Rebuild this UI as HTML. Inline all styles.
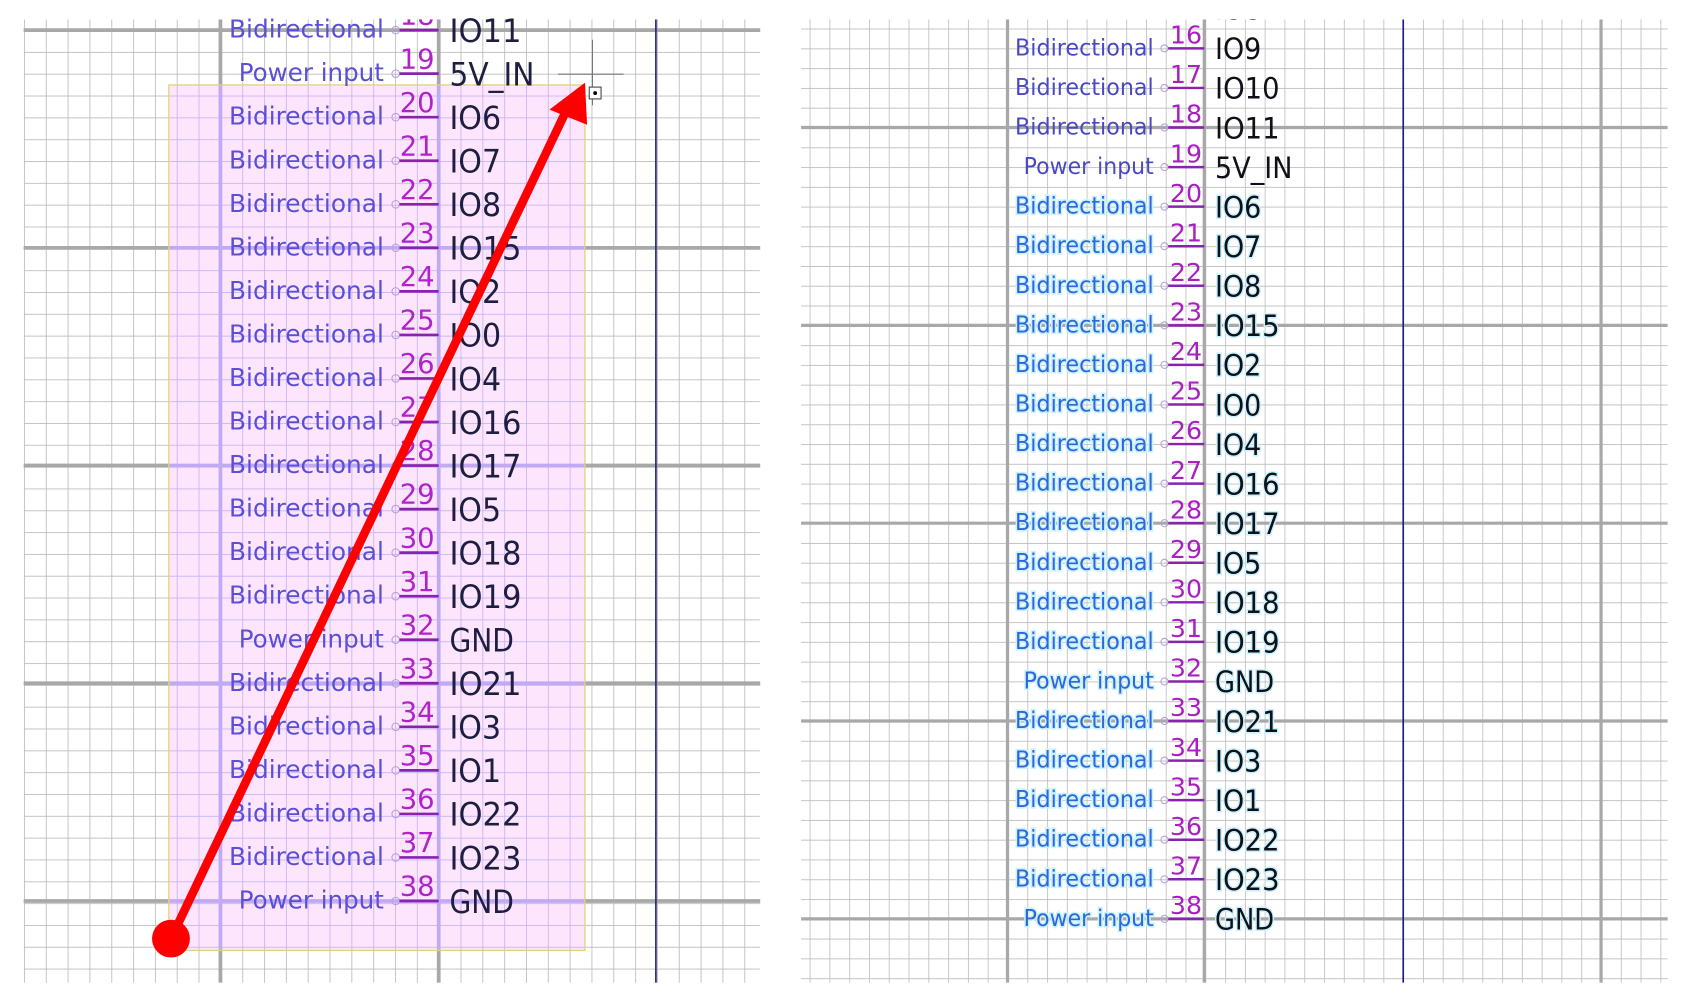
<!DOCTYPE html>
<html><head><meta charset="utf-8"><style>
html,body{margin:0;padding:0;background:#fff;width:1686px;height:1001px;overflow:hidden}
svg{display:block}
text{font-family:"DejaVu Sans","Liberation Sans",sans-serif}
.lb{fill:#5a4fd6;font-size:23px;text-anchor:end}
.ln{fill:#b023c8;font-size:25.5px;text-anchor:middle}
.lnm{fill:#1e1e40;font-size:29.5px}
.rb{fill:#4848c4;font-size:21.5px;text-anchor:end}
.rg{fill:#2f66dc;stroke:#c8f2ff;stroke-width:3px;paint-order:stroke}
.rn{fill:#a820c0;font-size:23.5px;text-anchor:middle}
.rnm{fill:#101018;font-size:27.5px}
.rng{stroke:#c8f2ff;stroke-width:3px;paint-order:stroke}
</style></head><body>
<svg width="1686" height="1001" viewBox="0 0 1568 931" preserveAspectRatio="none">
<defs>
<pattern id="pl" patternUnits="userSpaceOnUse" x="22.3" y="7.7" width="20.3" height="20.3"><path d="M0 0V20.3M0 0H20.3" stroke="#bcbcbc" stroke-width="1.6" fill="none"/></pattern>
<pattern id="pp" patternUnits="userSpaceOnUse" x="22.3" y="7.7" width="20.3" height="20.3"><path d="M0 0V20.3M0 0H20.3" stroke="#c6b4f2" stroke-width="1.6" fill="none"/></pattern>
<pattern id="pr" patternUnits="userSpaceOnUse" x="753" y="8.2" width="18.4" height="18.4"><path d="M0 0V18.4M0 0H18.4" stroke="#bcbcbc" stroke-width="1.5" fill="none"/></pattern>
<clipPath id="cl"><rect x="22" y="18" width="685" height="896"/></clipPath>
<clipPath id="ck"><rect x="157" y="79" width="387" height="805"/></clipPath>
<clipPath id="cr"><rect x="745" y="18" width="806" height="896"/></clipPath>
</defs>
<g clip-path="url(#cl)">
<rect x="22" y="18" width="686" height="897" fill="url(#pl)"/>
<g stroke="#a8a8a8" stroke-width="3.5">
<path d="M205 18V914M408 18V914M0 28H708M0 230.5H708M0 433H708M0 635.5H708M0 838H708"/>
</g>
<line x1="610" y1="18" x2="610" y2="914" stroke="#1c1c88" stroke-width="1.5"/>
<rect x="157" y="79" width="387" height="805" fill="#fde6fd"/>
<g clip-path="url(#ck)">
<rect x="157" y="79" width="387" height="805" fill="url(#pp)"/>
<path d="M205 18V914M408 18V914M0 230.5H708M0 433H708M0 635.5H708M0 838H708" stroke="#c0aaf4" stroke-width="3.5"/>
</g>
<rect x="157" y="79" width="387" height="805" fill="none" stroke="#e2d27a" stroke-width="1.2"/>
<path d="M519 69H580M551 37V98" stroke="#777" stroke-width="1"/>
<rect x="548" y="81" width="11" height="11" fill="#fff" stroke="#444" stroke-width="1"/>
<circle cx="553.5" cy="86.5" r="1.8" fill="#000"/>
</g>
<g>
<g transform="translate(0,28)"><text class="lb" x="357" y="7" textLength="144" lengthAdjust="spacingAndGlyphs">Bidirectional</text><circle cx="368" cy="0" r="3.5" fill="none" stroke="#b8a0d8"/><line x1="371.5" x2="408" y1="0" y2="0" stroke="#8a22b0" stroke-width="2.5"/><text class="lnm" x="418" y="11" textLength="67" lengthAdjust="spacingAndGlyphs">IO11</text></g>
<g transform="translate(0,68.5)"><text class="lb" x="357" y="7" textLength="135" lengthAdjust="spacingAndGlyphs">Power input</text><circle cx="368" cy="0" r="3.5" fill="none" stroke="#b8a0d8"/><line x1="371.5" x2="408" y1="0" y2="0" stroke="#8a22b0" stroke-width="2.5"/><text class="ln" x="388" y="-5">19</text><text class="lnm" x="418" y="11" textLength="79" lengthAdjust="spacingAndGlyphs">5V_IN</text></g>
<g transform="translate(0,109)"><text class="lb" x="357" y="7" textLength="144" lengthAdjust="spacingAndGlyphs">Bidirectional</text><circle cx="368" cy="0" r="3.5" fill="none" stroke="#b8a0d8"/><line x1="371.5" x2="408" y1="0" y2="0" stroke="#8a22b0" stroke-width="2.5"/><text class="ln" x="388" y="-5">20</text><text class="lnm" x="418" y="11" textLength="48" lengthAdjust="spacingAndGlyphs">IO6</text></g>
<g transform="translate(0,149.5)"><text class="lb" x="357" y="7" textLength="144" lengthAdjust="spacingAndGlyphs">Bidirectional</text><circle cx="368" cy="0" r="3.5" fill="none" stroke="#b8a0d8"/><line x1="371.5" x2="408" y1="0" y2="0" stroke="#8a22b0" stroke-width="2.5"/><text class="ln" x="388" y="-5">21</text><text class="lnm" x="418" y="11" textLength="48" lengthAdjust="spacingAndGlyphs">IO7</text></g>
<g transform="translate(0,190)"><text class="lb" x="357" y="7" textLength="144" lengthAdjust="spacingAndGlyphs">Bidirectional</text><circle cx="368" cy="0" r="3.5" fill="none" stroke="#b8a0d8"/><line x1="371.5" x2="408" y1="0" y2="0" stroke="#8a22b0" stroke-width="2.5"/><text class="ln" x="388" y="-5">22</text><text class="lnm" x="418" y="11" textLength="48" lengthAdjust="spacingAndGlyphs">IO8</text></g>
<g transform="translate(0,230.5)"><text class="lb" x="357" y="7" textLength="144" lengthAdjust="spacingAndGlyphs">Bidirectional</text><circle cx="368" cy="0" r="3.5" fill="none" stroke="#b8a0d8"/><line x1="371.5" x2="408" y1="0" y2="0" stroke="#8a22b0" stroke-width="2.5"/><text class="ln" x="388" y="-5">23</text><text class="lnm" x="418" y="11" textLength="67" lengthAdjust="spacingAndGlyphs">IO15</text></g>
<g transform="translate(0,271)"><text class="lb" x="357" y="7" textLength="144" lengthAdjust="spacingAndGlyphs">Bidirectional</text><circle cx="368" cy="0" r="3.5" fill="none" stroke="#b8a0d8"/><line x1="371.5" x2="408" y1="0" y2="0" stroke="#8a22b0" stroke-width="2.5"/><text class="ln" x="388" y="-5">24</text><text class="lnm" x="418" y="11" textLength="48" lengthAdjust="spacingAndGlyphs">IO2</text></g>
<g transform="translate(0,311.5)"><text class="lb" x="357" y="7" textLength="144" lengthAdjust="spacingAndGlyphs">Bidirectional</text><circle cx="368" cy="0" r="3.5" fill="none" stroke="#b8a0d8"/><line x1="371.5" x2="408" y1="0" y2="0" stroke="#8a22b0" stroke-width="2.5"/><text class="ln" x="388" y="-5">25</text><text class="lnm" x="418" y="11" textLength="48" lengthAdjust="spacingAndGlyphs">IO0</text></g>
<g transform="translate(0,352)"><text class="lb" x="357" y="7" textLength="144" lengthAdjust="spacingAndGlyphs">Bidirectional</text><circle cx="368" cy="0" r="3.5" fill="none" stroke="#b8a0d8"/><line x1="371.5" x2="408" y1="0" y2="0" stroke="#8a22b0" stroke-width="2.5"/><text class="ln" x="388" y="-5">26</text><text class="lnm" x="418" y="11" textLength="48" lengthAdjust="spacingAndGlyphs">IO4</text></g>
<g transform="translate(0,392.5)"><text class="lb" x="357" y="7" textLength="144" lengthAdjust="spacingAndGlyphs">Bidirectional</text><circle cx="368" cy="0" r="3.5" fill="none" stroke="#b8a0d8"/><line x1="371.5" x2="408" y1="0" y2="0" stroke="#8a22b0" stroke-width="2.5"/><text class="ln" x="388" y="-5">27</text><text class="lnm" x="418" y="11" textLength="67" lengthAdjust="spacingAndGlyphs">IO16</text></g>
<g transform="translate(0,433)"><text class="lb" x="357" y="7" textLength="144" lengthAdjust="spacingAndGlyphs">Bidirectional</text><circle cx="368" cy="0" r="3.5" fill="none" stroke="#b8a0d8"/><line x1="371.5" x2="408" y1="0" y2="0" stroke="#8a22b0" stroke-width="2.5"/><text class="ln" x="388" y="-5">28</text><text class="lnm" x="418" y="11" textLength="67" lengthAdjust="spacingAndGlyphs">IO17</text></g>
<g transform="translate(0,473.5)"><text class="lb" x="357" y="7" textLength="144" lengthAdjust="spacingAndGlyphs">Bidirectional</text><circle cx="368" cy="0" r="3.5" fill="none" stroke="#b8a0d8"/><line x1="371.5" x2="408" y1="0" y2="0" stroke="#8a22b0" stroke-width="2.5"/><text class="ln" x="388" y="-5">29</text><text class="lnm" x="418" y="11" textLength="48" lengthAdjust="spacingAndGlyphs">IO5</text></g>
<g transform="translate(0,514)"><text class="lb" x="357" y="7" textLength="144" lengthAdjust="spacingAndGlyphs">Bidirectional</text><circle cx="368" cy="0" r="3.5" fill="none" stroke="#b8a0d8"/><line x1="371.5" x2="408" y1="0" y2="0" stroke="#8a22b0" stroke-width="2.5"/><text class="ln" x="388" y="-5">30</text><text class="lnm" x="418" y="11" textLength="67" lengthAdjust="spacingAndGlyphs">IO18</text></g>
<g transform="translate(0,554.5)"><text class="lb" x="357" y="7" textLength="144" lengthAdjust="spacingAndGlyphs">Bidirectional</text><circle cx="368" cy="0" r="3.5" fill="none" stroke="#b8a0d8"/><line x1="371.5" x2="408" y1="0" y2="0" stroke="#8a22b0" stroke-width="2.5"/><text class="ln" x="388" y="-5">31</text><text class="lnm" x="418" y="11" textLength="67" lengthAdjust="spacingAndGlyphs">IO19</text></g>
<g transform="translate(0,595)"><text class="lb" x="357" y="7" textLength="135" lengthAdjust="spacingAndGlyphs">Power input</text><circle cx="368" cy="0" r="3.5" fill="none" stroke="#b8a0d8"/><line x1="371.5" x2="408" y1="0" y2="0" stroke="#8a22b0" stroke-width="2.5"/><text class="ln" x="388" y="-5">32</text><text class="lnm" x="418" y="11" textLength="60" lengthAdjust="spacingAndGlyphs">GND</text></g>
<g transform="translate(0,635.5)"><text class="lb" x="357" y="7" textLength="144" lengthAdjust="spacingAndGlyphs">Bidirectional</text><circle cx="368" cy="0" r="3.5" fill="none" stroke="#b8a0d8"/><line x1="371.5" x2="408" y1="0" y2="0" stroke="#8a22b0" stroke-width="2.5"/><text class="ln" x="388" y="-5">33</text><text class="lnm" x="418" y="11" textLength="67" lengthAdjust="spacingAndGlyphs">IO21</text></g>
<g transform="translate(0,676)"><text class="lb" x="357" y="7" textLength="144" lengthAdjust="spacingAndGlyphs">Bidirectional</text><circle cx="368" cy="0" r="3.5" fill="none" stroke="#b8a0d8"/><line x1="371.5" x2="408" y1="0" y2="0" stroke="#8a22b0" stroke-width="2.5"/><text class="ln" x="388" y="-5">34</text><text class="lnm" x="418" y="11" textLength="48" lengthAdjust="spacingAndGlyphs">IO3</text></g>
<g transform="translate(0,716.5)"><text class="lb" x="357" y="7" textLength="144" lengthAdjust="spacingAndGlyphs">Bidirectional</text><circle cx="368" cy="0" r="3.5" fill="none" stroke="#b8a0d8"/><line x1="371.5" x2="408" y1="0" y2="0" stroke="#8a22b0" stroke-width="2.5"/><text class="ln" x="388" y="-5">35</text><text class="lnm" x="418" y="11" textLength="48" lengthAdjust="spacingAndGlyphs">IO1</text></g>
<g transform="translate(0,757)"><text class="lb" x="357" y="7" textLength="144" lengthAdjust="spacingAndGlyphs">Bidirectional</text><circle cx="368" cy="0" r="3.5" fill="none" stroke="#b8a0d8"/><line x1="371.5" x2="408" y1="0" y2="0" stroke="#8a22b0" stroke-width="2.5"/><text class="ln" x="388" y="-5">36</text><text class="lnm" x="418" y="11" textLength="67" lengthAdjust="spacingAndGlyphs">IO22</text></g>
<g transform="translate(0,797.5)"><text class="lb" x="357" y="7" textLength="144" lengthAdjust="spacingAndGlyphs">Bidirectional</text><circle cx="368" cy="0" r="3.5" fill="none" stroke="#b8a0d8"/><line x1="371.5" x2="408" y1="0" y2="0" stroke="#8a22b0" stroke-width="2.5"/><text class="ln" x="388" y="-5">37</text><text class="lnm" x="418" y="11" textLength="67" lengthAdjust="spacingAndGlyphs">IO23</text></g>
<g transform="translate(0,838)"><text class="lb" x="357" y="7" textLength="135" lengthAdjust="spacingAndGlyphs">Power input</text><circle cx="368" cy="0" r="3.5" fill="none" stroke="#b8a0d8"/><line x1="371.5" x2="408" y1="0" y2="0" stroke="#8a22b0" stroke-width="2.5"/><text class="ln" x="388" y="-5">38</text><text class="lnm" x="418" y="11" textLength="60" lengthAdjust="spacingAndGlyphs">GND</text></g>
</g>
<g clip-path="url(#cl)"><text class="ln" x="388" y="23">18</text></g>
<line x1="159" y1="873" x2="528" y2="100" stroke="#f00" stroke-width="8" stroke-linecap="round"/>
<polygon points="544,77 511,102 546,116" fill="#f00"/>
<circle cx="159" cy="873" r="17.6" fill="#f00"/>

<g clip-path="url(#cr)">
<rect x="745" y="18" width="806" height="897" fill="url(#pr)"/>
<path d="M937 18V914M1120 18V914M1489 18V914M745 118.6H1551M745 302.6H1551M745 486.6H1551M745 670.6H1551M745 854.6H1551" stroke="#a8a8a8" stroke-width="3"/>
<line x1="1305" y1="18" x2="1305" y2="914" stroke="#1c1c88" stroke-width="1.5"/>
<g transform="translate(0,8.2)"><line x1="1086.5" x2="1120" y1="0" y2="0" stroke="#8a22b0" stroke-width="2.3"/><text class="rnm" x="1130" y="10" textLength="43" lengthAdjust="spacingAndGlyphs">IO8</text><text class="rn" x="1103" y="-4.5">15</text></g>
</g>
<g>
<g transform="translate(0,45)"><text class="rb" x="1073" y="6.5" textLength="129" lengthAdjust="spacingAndGlyphs">Bidirectional</text><circle cx="1083" cy="0" r="3.3" fill="none" stroke="#b8a0d8"/><line x1="1086.5" x2="1120" y1="0" y2="0" stroke="#8a22b0" stroke-width="2.3"/><text class="rn" x="1103" y="-4.5">16</text><text class="rnm" x="1130" y="10" textLength="43" lengthAdjust="spacingAndGlyphs">IO9</text></g>
<g transform="translate(0,81.8)"><text class="rb" x="1073" y="6.5" textLength="129" lengthAdjust="spacingAndGlyphs">Bidirectional</text><circle cx="1083" cy="0" r="3.3" fill="none" stroke="#b8a0d8"/><line x1="1086.5" x2="1120" y1="0" y2="0" stroke="#8a22b0" stroke-width="2.3"/><text class="rn" x="1103" y="-4.5">17</text><text class="rnm" x="1130" y="10" textLength="60" lengthAdjust="spacingAndGlyphs">IO10</text></g>
<g transform="translate(0,118.6)"><text class="rb" x="1073" y="6.5" textLength="129" lengthAdjust="spacingAndGlyphs">Bidirectional</text><circle cx="1083" cy="0" r="3.3" fill="none" stroke="#b8a0d8"/><line x1="1086.5" x2="1120" y1="0" y2="0" stroke="#8a22b0" stroke-width="2.3"/><text class="rn" x="1103" y="-4.5">18</text><text class="rnm" x="1130" y="10" textLength="60" lengthAdjust="spacingAndGlyphs">IO11</text></g>
<g transform="translate(0,155.4)"><text class="rb" x="1073" y="6.5" textLength="121" lengthAdjust="spacingAndGlyphs">Power input</text><circle cx="1083" cy="0" r="3.3" fill="none" stroke="#b8a0d8"/><line x1="1086.5" x2="1120" y1="0" y2="0" stroke="#8a22b0" stroke-width="2.3"/><text class="rn" x="1103" y="-4.5">19</text><text class="rnm" x="1130" y="10" textLength="72" lengthAdjust="spacingAndGlyphs">5V_IN</text></g>
<g transform="translate(0,192.2)"><text class="rb rg" x="1073" y="6.5" textLength="129" lengthAdjust="spacingAndGlyphs">Bidirectional</text><circle cx="1083" cy="0" r="3.3" fill="none" stroke="#b8a0d8"/><line x1="1086.5" x2="1120" y1="0" y2="0" stroke="#8a22b0" stroke-width="2.3"/><text class="rn" x="1103" y="-4.5">20</text><text class="rnm rng" x="1130" y="10" textLength="43" lengthAdjust="spacingAndGlyphs">IO6</text></g>
<g transform="translate(0,229)"><text class="rb rg" x="1073" y="6.5" textLength="129" lengthAdjust="spacingAndGlyphs">Bidirectional</text><circle cx="1083" cy="0" r="3.3" fill="none" stroke="#b8a0d8"/><line x1="1086.5" x2="1120" y1="0" y2="0" stroke="#8a22b0" stroke-width="2.3"/><text class="rn" x="1103" y="-4.5">21</text><text class="rnm rng" x="1130" y="10" textLength="43" lengthAdjust="spacingAndGlyphs">IO7</text></g>
<g transform="translate(0,265.8)"><text class="rb rg" x="1073" y="6.5" textLength="129" lengthAdjust="spacingAndGlyphs">Bidirectional</text><circle cx="1083" cy="0" r="3.3" fill="none" stroke="#b8a0d8"/><line x1="1086.5" x2="1120" y1="0" y2="0" stroke="#8a22b0" stroke-width="2.3"/><text class="rn" x="1103" y="-4.5">22</text><text class="rnm rng" x="1130" y="10" textLength="43" lengthAdjust="spacingAndGlyphs">IO8</text></g>
<g transform="translate(0,302.6)"><text class="rb rg" x="1073" y="6.5" textLength="129" lengthAdjust="spacingAndGlyphs">Bidirectional</text><circle cx="1083" cy="0" r="3.3" fill="none" stroke="#b8a0d8"/><line x1="1086.5" x2="1120" y1="0" y2="0" stroke="#8a22b0" stroke-width="2.3"/><text class="rn" x="1103" y="-4.5">23</text><text class="rnm rng" x="1130" y="10" textLength="60" lengthAdjust="spacingAndGlyphs">IO15</text></g>
<g transform="translate(0,339.4)"><text class="rb rg" x="1073" y="6.5" textLength="129" lengthAdjust="spacingAndGlyphs">Bidirectional</text><circle cx="1083" cy="0" r="3.3" fill="none" stroke="#b8a0d8"/><line x1="1086.5" x2="1120" y1="0" y2="0" stroke="#8a22b0" stroke-width="2.3"/><text class="rn" x="1103" y="-4.5">24</text><text class="rnm rng" x="1130" y="10" textLength="43" lengthAdjust="spacingAndGlyphs">IO2</text></g>
<g transform="translate(0,376.2)"><text class="rb rg" x="1073" y="6.5" textLength="129" lengthAdjust="spacingAndGlyphs">Bidirectional</text><circle cx="1083" cy="0" r="3.3" fill="none" stroke="#b8a0d8"/><line x1="1086.5" x2="1120" y1="0" y2="0" stroke="#8a22b0" stroke-width="2.3"/><text class="rn" x="1103" y="-4.5">25</text><text class="rnm rng" x="1130" y="10" textLength="43" lengthAdjust="spacingAndGlyphs">IO0</text></g>
<g transform="translate(0,413)"><text class="rb rg" x="1073" y="6.5" textLength="129" lengthAdjust="spacingAndGlyphs">Bidirectional</text><circle cx="1083" cy="0" r="3.3" fill="none" stroke="#b8a0d8"/><line x1="1086.5" x2="1120" y1="0" y2="0" stroke="#8a22b0" stroke-width="2.3"/><text class="rn" x="1103" y="-4.5">26</text><text class="rnm rng" x="1130" y="10" textLength="43" lengthAdjust="spacingAndGlyphs">IO4</text></g>
<g transform="translate(0,449.8)"><text class="rb rg" x="1073" y="6.5" textLength="129" lengthAdjust="spacingAndGlyphs">Bidirectional</text><circle cx="1083" cy="0" r="3.3" fill="none" stroke="#b8a0d8"/><line x1="1086.5" x2="1120" y1="0" y2="0" stroke="#8a22b0" stroke-width="2.3"/><text class="rn" x="1103" y="-4.5">27</text><text class="rnm rng" x="1130" y="10" textLength="60" lengthAdjust="spacingAndGlyphs">IO16</text></g>
<g transform="translate(0,486.6)"><text class="rb rg" x="1073" y="6.5" textLength="129" lengthAdjust="spacingAndGlyphs">Bidirectional</text><circle cx="1083" cy="0" r="3.3" fill="none" stroke="#b8a0d8"/><line x1="1086.5" x2="1120" y1="0" y2="0" stroke="#8a22b0" stroke-width="2.3"/><text class="rn" x="1103" y="-4.5">28</text><text class="rnm rng" x="1130" y="10" textLength="60" lengthAdjust="spacingAndGlyphs">IO17</text></g>
<g transform="translate(0,523.4)"><text class="rb rg" x="1073" y="6.5" textLength="129" lengthAdjust="spacingAndGlyphs">Bidirectional</text><circle cx="1083" cy="0" r="3.3" fill="none" stroke="#b8a0d8"/><line x1="1086.5" x2="1120" y1="0" y2="0" stroke="#8a22b0" stroke-width="2.3"/><text class="rn" x="1103" y="-4.5">29</text><text class="rnm rng" x="1130" y="10" textLength="43" lengthAdjust="spacingAndGlyphs">IO5</text></g>
<g transform="translate(0,560.2)"><text class="rb rg" x="1073" y="6.5" textLength="129" lengthAdjust="spacingAndGlyphs">Bidirectional</text><circle cx="1083" cy="0" r="3.3" fill="none" stroke="#b8a0d8"/><line x1="1086.5" x2="1120" y1="0" y2="0" stroke="#8a22b0" stroke-width="2.3"/><text class="rn" x="1103" y="-4.5">30</text><text class="rnm rng" x="1130" y="10" textLength="60" lengthAdjust="spacingAndGlyphs">IO18</text></g>
<g transform="translate(0,597)"><text class="rb rg" x="1073" y="6.5" textLength="129" lengthAdjust="spacingAndGlyphs">Bidirectional</text><circle cx="1083" cy="0" r="3.3" fill="none" stroke="#b8a0d8"/><line x1="1086.5" x2="1120" y1="0" y2="0" stroke="#8a22b0" stroke-width="2.3"/><text class="rn" x="1103" y="-4.5">31</text><text class="rnm rng" x="1130" y="10" textLength="60" lengthAdjust="spacingAndGlyphs">IO19</text></g>
<g transform="translate(0,633.8)"><text class="rb rg" x="1073" y="6.5" textLength="121" lengthAdjust="spacingAndGlyphs">Power input</text><circle cx="1083" cy="0" r="3.3" fill="none" stroke="#b8a0d8"/><line x1="1086.5" x2="1120" y1="0" y2="0" stroke="#8a22b0" stroke-width="2.3"/><text class="rn" x="1103" y="-4.5">32</text><text class="rnm rng" x="1130" y="10" textLength="55" lengthAdjust="spacingAndGlyphs">GND</text></g>
<g transform="translate(0,670.6)"><text class="rb rg" x="1073" y="6.5" textLength="129" lengthAdjust="spacingAndGlyphs">Bidirectional</text><circle cx="1083" cy="0" r="3.3" fill="none" stroke="#b8a0d8"/><line x1="1086.5" x2="1120" y1="0" y2="0" stroke="#8a22b0" stroke-width="2.3"/><text class="rn" x="1103" y="-4.5">33</text><text class="rnm rng" x="1130" y="10" textLength="60" lengthAdjust="spacingAndGlyphs">IO21</text></g>
<g transform="translate(0,707.4)"><text class="rb rg" x="1073" y="6.5" textLength="129" lengthAdjust="spacingAndGlyphs">Bidirectional</text><circle cx="1083" cy="0" r="3.3" fill="none" stroke="#b8a0d8"/><line x1="1086.5" x2="1120" y1="0" y2="0" stroke="#8a22b0" stroke-width="2.3"/><text class="rn" x="1103" y="-4.5">34</text><text class="rnm rng" x="1130" y="10" textLength="43" lengthAdjust="spacingAndGlyphs">IO3</text></g>
<g transform="translate(0,744.2)"><text class="rb rg" x="1073" y="6.5" textLength="129" lengthAdjust="spacingAndGlyphs">Bidirectional</text><circle cx="1083" cy="0" r="3.3" fill="none" stroke="#b8a0d8"/><line x1="1086.5" x2="1120" y1="0" y2="0" stroke="#8a22b0" stroke-width="2.3"/><text class="rn" x="1103" y="-4.5">35</text><text class="rnm rng" x="1130" y="10" textLength="43" lengthAdjust="spacingAndGlyphs">IO1</text></g>
<g transform="translate(0,781)"><text class="rb rg" x="1073" y="6.5" textLength="129" lengthAdjust="spacingAndGlyphs">Bidirectional</text><circle cx="1083" cy="0" r="3.3" fill="none" stroke="#b8a0d8"/><line x1="1086.5" x2="1120" y1="0" y2="0" stroke="#8a22b0" stroke-width="2.3"/><text class="rn" x="1103" y="-4.5">36</text><text class="rnm rng" x="1130" y="10" textLength="60" lengthAdjust="spacingAndGlyphs">IO22</text></g>
<g transform="translate(0,817.8)"><text class="rb rg" x="1073" y="6.5" textLength="129" lengthAdjust="spacingAndGlyphs">Bidirectional</text><circle cx="1083" cy="0" r="3.3" fill="none" stroke="#b8a0d8"/><line x1="1086.5" x2="1120" y1="0" y2="0" stroke="#8a22b0" stroke-width="2.3"/><text class="rn" x="1103" y="-4.5">37</text><text class="rnm rng" x="1130" y="10" textLength="60" lengthAdjust="spacingAndGlyphs">IO23</text></g>
<g transform="translate(0,854.6)"><text class="rb rg" x="1073" y="6.5" textLength="121" lengthAdjust="spacingAndGlyphs">Power input</text><circle cx="1083" cy="0" r="3.3" fill="none" stroke="#b8a0d8"/><line x1="1086.5" x2="1120" y1="0" y2="0" stroke="#8a22b0" stroke-width="2.3"/><text class="rn" x="1103" y="-4.5">38</text><text class="rnm rng" x="1130" y="10" textLength="55" lengthAdjust="spacingAndGlyphs">GND</text></g>
</g>
</svg>
</body></html>
